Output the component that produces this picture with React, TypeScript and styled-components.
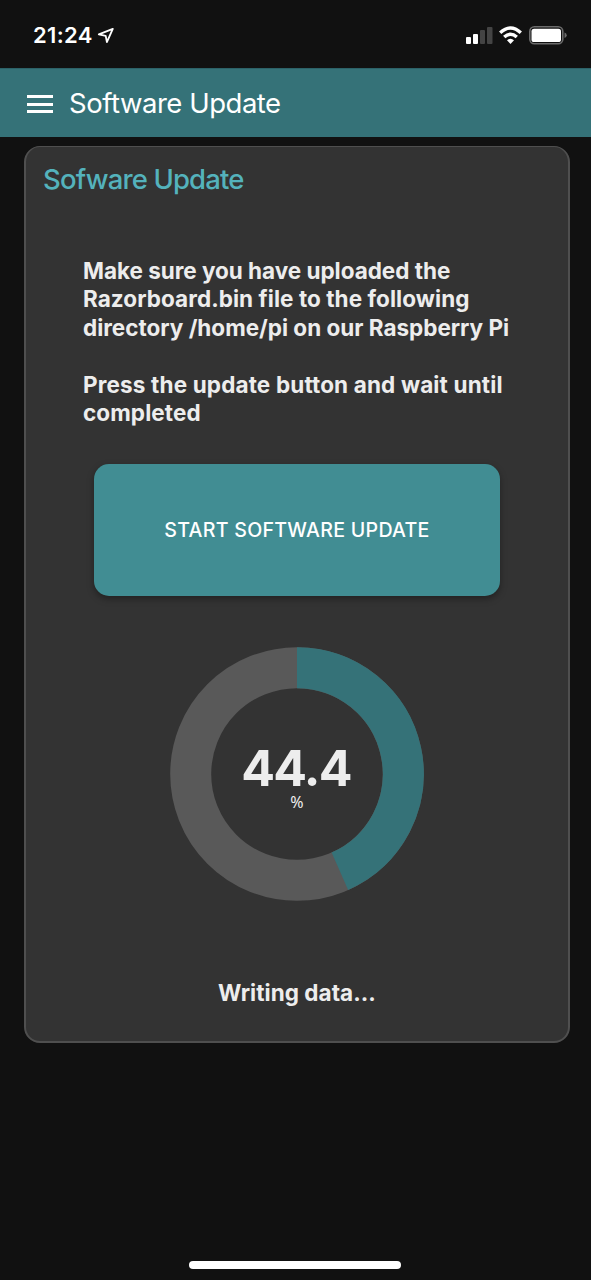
import React from "react";
import styled, { createGlobalStyle } from "styled-components";

const GlobalStyle = createGlobalStyle`
  * { box-sizing: border-box; }
  body { margin: 0; background: #111111; }
`;

const Screen = styled.div`
  width: 591px;
  height: 1280px;
  display: flex;
  flex-direction: column;
  background: #111111;
  color: #ededed;
  font-family: Inter, "Liberation Sans", sans-serif;
  overflow: hidden;
`;

const StatusBar = styled.header`
  flex: none;
  height: 68px;
  display: flex;
  justify-content: space-between;
  padding: 22px 23px 0 33px;
  color: #fff;
`;

const Clock = styled.div`
  display: flex;
  gap: 4px;
  margin-top: -1px;
  font-size: 22px;
  font-weight: 600;
  line-height: 28px;
  letter-spacing: 0.35px;
`;

const NavBar = styled.nav`
  flex: none;
  height: 69px;
  display: flex;
  align-items: center;
  gap: 16px;
  padding: 2px 0 0 27px;
  background: #357278;
  border-top: 1px solid #2c6268;
`;

const MenuButton = styled.button`
  width: 26px;
  height: 18px;
  padding: 0;
  border: 0;
  background: none;
  display: flex;
  flex-direction: column;
  justify-content: space-between;
`;

const MenuBar = styled.span`
  height: 3px;
  background: #fff;
`;

const PageTitle = styled.h1`
  margin: -2px 0 0;
  color: #fff;
  font-size: 27.5px;
  font-weight: 400;
  line-height: 34px;
  letter-spacing: -0.47px;
  white-space: nowrap;
`;

const Card = styled.main`
  flex: none;
  width: 546px;
  height: 897px;
  margin: 9px 0 0 24px;
  border: 2px solid #4f4f4f;
  border-top-width: 1px;
  border-radius: 16px;
  background: #333333;
  display: flex;
  flex-direction: column;
  align-items: center;
`;

const CardTitle = styled.h2`
  align-self: flex-start;
  margin: 15px 0 0 17px;
  color: #54b2bc;
  font-size: 27.5px;
  font-weight: 500;
  line-height: 34px;
  letter-spacing: -0.85px;
`;

const Instructions = styled.div`
  align-self: flex-start;
  height: 200px;
  margin: 60.5px 0 0 57px;
  font-size: 22.5px;
  font-weight: 700;
  line-height: 28.5px;
`;

const Paragraph = styled.p`
  margin: 0 0 28.5px;
`;

const Line = styled.span<{ $spacing: number }>`
  display: block;
  white-space: nowrap;
  letter-spacing: ${(p) => p.$spacing}px;
`;

const StartButton = styled.button`
  flex: none;
  width: 406px;
  height: 132px;
  margin: 7.5px 0 0 0;
  padding: 0;
  border: 0;
  border-radius: 15px;
  background: #418d93;
  box-shadow: 0 3px 7px rgba(0, 0, 0, 0.35);
  color: #fff;
  font: 500 19.6px/26px Inter, sans-serif;
  letter-spacing: 0.27px;
`;

const Gauge = styled.div`
  flex: none;
  width: 254px;
  height: 254px;
  margin-top: 51px;
  display: grid;
`;

const Ring = styled.svg`
  grid-area: 1 / 1;
`;

const Reading = styled.div`
  grid-area: 1 / 1;
  display: flex;
  flex-direction: column;
  align-items: center;
  padding-top: 98px;
`;

const Percent = styled.strong`
  font-size: 50px;
  font-weight: 700;
  line-height: 46px;
  letter-spacing: -1.7px;
  padding-right: 2px;
`;

const Unit = styled.span`
  margin-top: 1px;
  font: 400 16px/20px "Noto Sans", sans-serif;
`;

const Status = styled.p`
  margin: 77px 0 0;
  font-size: 22.5px;
  font-weight: 700;
  line-height: 30px;
  letter-spacing: 0.05px;
  white-space: nowrap;
`;

const HomeIndicator = styled.div`
  width: 212px;
  height: 8px;
  margin: auto 0 11px 189px;
  border-radius: 4px;
  background: #fff;
`;

const StatusIcons = () => (
  <svg width="104" height="26" viewBox="464 22 104 26" fill="#fff">
    <rect x="466" y="37" width="5" height="7" rx="1" />
    <rect x="473" y="34" width="5" height="10" rx="1" />
    <rect x="480" y="30" width="5" height="14" rx="1" fill="#444" />
    <rect x="487" y="27" width="5.5" height="17" rx="1" fill="#444" />
    <g fill="none" stroke="#fff" strokeWidth="3.4">
      <path d="M500.2 32.8 Q510.5 23.2 520.8 32.8" />
      <path d="M504.2 37 Q510.5 31.4 516.8 37" />
    </g>
    <path d="M507 40.2 Q510.5 37.2 514 40.2 L510.5 44Z" />
    <rect x="529.8" y="26.8" width="33" height="17" rx="4.6" fill="none" stroke="#6b6b6b" strokeWidth="1.6" />
    <rect x="531.5" y="28.7" width="29.5" height="13.3" rx="2.6" />
    <path d="M564.5 32.5 Q566.7 33.2 566.7 35.3 Q566.7 37.4 564.5 38.1Z" fill="#6b6b6b" />
  </svg>
);

const LocationIcon = () => (
  <svg width="18" height="26" viewBox="97 21 18 26" fill="none" stroke="#fff" strokeWidth="1.8" strokeLinejoin="round">
    <path d="M112.8 28.8 L98.8 34.4 L105.7 35.9 L106.9 42.2 Z" />
  </svg>
);

const SWEEP = 156.2;

const ProgressRing = () => {
  const a = (SWEEP * Math.PI) / 180;
  const r = 106.3;
  return (
    <Ring width="254" height="254" viewBox="0 0 254 254" fill="none" strokeWidth="41">
      <circle cx="127" cy="127" r={r} stroke="#595959" />
      <path
        d={`M127 ${127 - r} A${r} ${r} 0 0 1 ${127 + r * Math.sin(a)} ${127 - r * Math.cos(a)}`}
        stroke="#357278"
      />
    </Ring>
  );
};

export default function App() {
  return (
    <Screen>
      <GlobalStyle />
      <StatusBar>
        <Clock>
          21:24
          <LocationIcon />
        </Clock>
        <StatusIcons />
      </StatusBar>
      <NavBar>
        <MenuButton aria-label="Menu">
          <MenuBar />
          <MenuBar />
          <MenuBar />
        </MenuButton>
        <PageTitle>Software Update</PageTitle>
      </NavBar>
      <Card>
        <CardTitle>Sofware Update</CardTitle>
        <Instructions>
          <Paragraph>
            <Line $spacing={-0.03}>Make sure you have uploaded the</Line>
            <Line $spacing={0.06}>Razorboard.bin file to the following</Line>
            <Line $spacing={-0.01}>directory /home/pi on our Raspberry Pi</Line>
          </Paragraph>
          <Paragraph>
            <Line $spacing={0.15}>Press the update button and wait until</Line>
            <Line $spacing={0.1}>completed</Line>
          </Paragraph>
        </Instructions>
        <StartButton>START SOFTWARE UPDATE</StartButton>
        <Gauge>
          <ProgressRing />
          <Reading>
            <Percent>44.4</Percent>
            <Unit>%</Unit>
          </Reading>
        </Gauge>
        <Status>Writing data...</Status>
      </Card>
      <HomeIndicator />
    </Screen>
  );
}
